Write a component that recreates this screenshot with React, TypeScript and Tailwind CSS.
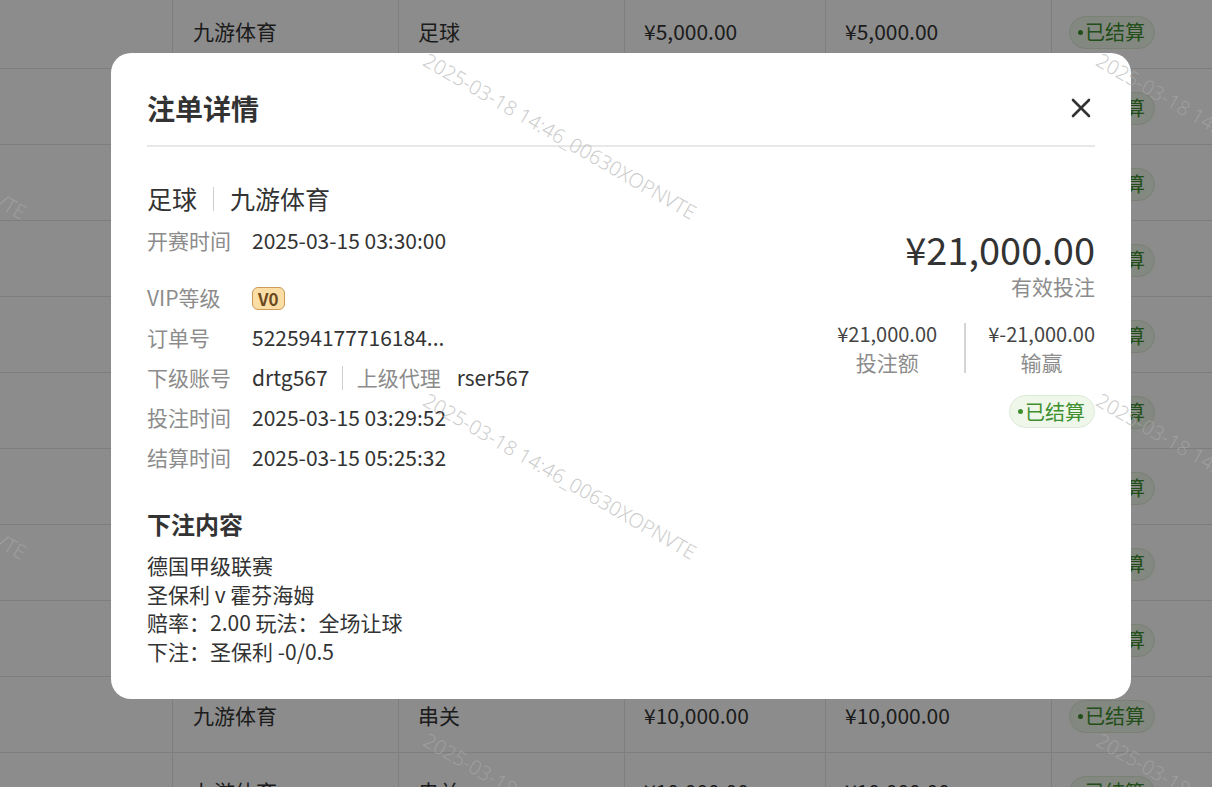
import React from "react";

type Row = {
    vendor: string;
    game: string;
    bet: string;
    valid: string;
};

const rows: Row[] = [
    { vendor: "九游体育", game: "足球", bet: "¥5,000.00", valid: "¥5,000.00" },
    { vendor: "九游体育", game: "足球", bet: "¥21,000.00", valid: "¥21,000.00" },
    { vendor: "九游体育", game: "足球", bet: "¥3,000.00", valid: "¥3,000.00" },
    { vendor: "九游体育", game: "足球", bet: "¥8,000.00", valid: "¥8,000.00" },
    { vendor: "九游体育", game: "足球", bet: "¥2,000.00", valid: "¥2,000.00" },
    { vendor: "九游体育", game: "串关", bet: "¥6,000.00", valid: "¥6,000.00" },
    { vendor: "九游体育", game: "串关", bet: "¥4,000.00", valid: "¥4,000.00" },
    { vendor: "九游体育", game: "串关", bet: "¥1,000.00", valid: "¥1,000.00" },
    { vendor: "九游体育", game: "串关", bet: "¥9,000.00", valid: "¥9,000.00" },
    { vendor: "九游体育", game: "串关", bet: "¥10,000.00", valid: "¥10,000.00" },
    { vendor: "九游体育", game: "串关", bet: "¥10,000.00", valid: "¥10,000.00" },
];

const watermarks = [
    { left: -240, top: 50 },
    { left: 430, top: 50 },
    { left: 1103, top: 50 },
    { left: -240, top: 390 },
    { left: 430, top: 390 },
    { left: 1103, top: 390 },
    { left: -240, top: 730 },
    { left: 430, top: 730 },
    { left: 1103, top: 730 },
];

const StatusBadge = () => (
    <span className="inline-flex items-center h-[33px] pl-[8px] pr-[9px] rounded-full bg-[#eef7ea] border border-[#dcebd5] text-[20px] text-[#3f8f2f]">
        <span className="w-[5px] h-[5px] rounded-full bg-current mr-[2px]" />
        已结算
    </span>
);

const InfoRow = ({ label, children }: { label: string; children: React.ReactNode }) => (
    <div className="flex items-center h-[28px]">
        <span className="w-[105px] shrink-0 text-[#8c8c8c]">{label}</span>
        <div className="flex items-center text-[#333]">{children}</div>
    </div>
);

const App = () => {
    return (
        <div
            className="relative w-full h-[787px] overflow-hidden bg-white"
            style={{ fontFamily: '"Noto Sans CJK SC", "Noto Sans", sans-serif' }}
        >
            {/* table behind the dialog */}
            <div className="-mt-[7px] text-[21px] text-[#333]">
                {rows.map((r, i) => (
                    <div
                        key={i}
                        className="grid grid-cols-[173px_226px_226px_201px_226px_1fr] h-[76px] border-b border-[#e6e6e6]"
                    >
                        <div className="border-r border-[#e6e6e6]" />
                        <div className="flex items-center pt-[3px] pl-[20px] border-r border-[#e6e6e6]">{r.vendor}</div>
                        <div className="flex items-center pt-[3px] pl-[19px] border-r border-[#e6e6e6]">{r.game}</div>
                        <div className="flex items-center pt-[3px] pl-[19px] border-r border-[#e6e6e6]">{r.bet}</div>
                        <div className="flex items-center pt-[3px] pl-[19px] border-r border-[#e6e6e6]">{r.valid}</div>
                        <div className="flex items-center pt-[3px] pl-[17px]">
                            <StatusBadge />
                        </div>
                    </div>
                ))}
            </div>

            <div className="absolute inset-0 bg-black/45" />

            {/* dialog */}
            <div className="absolute left-[111px] top-[53px] w-[1020px] h-[646px] bg-white rounded-[20px] px-[36px] pt-[38px]">
                <div className="flex items-center justify-between pb-[20px] border-b-2 border-[#e8e8e8]">
                    <h2 className="text-[28px] leading-[34px] font-bold text-[#333]">注单详情</h2>
                    <svg width="20" height="20" viewBox="0 0 20 20" className="mr-[4px]">
                        <path d="M2 2 L18 18 M18 2 L2 18" stroke="#333" strokeWidth="2.6" strokeLinecap="round" />
                    </svg>
                </div>

                <div className="flex justify-between pt-[36px] text-[21px]">
                    <div className="flex flex-col">
                        <div className="flex items-center h-[32px] text-[25px] text-[#333]">
                            <span>足球</span>
                            <span className="mx-[16px] w-px h-[24px] bg-[#cfcfcf]" />
                            <span>九游体育</span>
                        </div>
                        <div className="mt-[12px]">
                            <InfoRow label="开赛时间">2025-03-15 03:30:00</InfoRow>
                        </div>
                        <div className="mt-[29px] flex flex-col gap-[12px]">
                            <InfoRow label="VIP等级">
                                <span className="inline-flex items-center justify-center h-[23px] px-[5px] rounded-[6px] bg-[#fbdea6] border border-[#c99a58] text-[17px] font-bold text-[#6b4a1f] leading-none">
                                    V0
                                </span>
                            </InfoRow>
                            <InfoRow label="订单号">522594177716184...</InfoRow>
                            <InfoRow label="下级账号">
                                <span>drtg567</span>
                                <span className="mx-[14px] w-px h-[24px] bg-[#cfcfcf]" />
                                <span className="text-[#8c8c8c] mr-[16px]">上级代理</span>
                                <span>rser567</span>
                            </InfoRow>
                            <InfoRow label="投注时间">2025-03-15 03:29:52</InfoRow>
                            <InfoRow label="结算时间">2025-03-15 05:25:32</InfoRow>
                        </div>
                    </div>

                    <div className="flex flex-col items-end pt-[43px]">
                        <div className="text-[38px] leading-[46px] text-[#333]">¥21,000.00</div>
                        <div className="text-[21px] leading-[28px] text-[#8c8c8c]">有效投注</div>
                        <div className="flex items-center mt-[20px]">
                            <div className="flex flex-col items-center pr-[27px]">
                                <span className="text-[20px] leading-[28px] text-[#444]">¥21,000.00</span>
                                <span className="text-[21px] leading-[28px] text-[#8c8c8c]">投注额</span>
                            </div>
                            <span className="w-[2px] h-[50px] bg-[#d4d4d4]" />
                            <div className="flex flex-col items-center pl-[22px]">
                                <span className="text-[20px] leading-[28px] text-[#444]">¥-21,000.00</span>
                                <span className="text-[21px] leading-[28px] text-[#8c8c8c]">输赢</span>
                            </div>
                        </div>
                        <div className="mt-[14px]">
                            <StatusBadge />
                        </div>
                    </div>
                </div>

                <h3 className="mt-[37px] text-[24px] leading-[30px] font-bold text-[#333]">下注内容</h3>
                <div className="mt-[12px] text-[21px] leading-[28.5px] text-[#333]">
                    <div>德国甲级联赛</div>
                    <div>圣保利 v 霍芬海姆</div>
                    <div>赔率：2.00 玩法：全场让球</div>
                    <div>下注：圣保利 -0/0.5</div>
                </div>
            </div>

            {/* watermark layer */}
            <div className="absolute inset-0 pointer-events-none">
                {watermarks.map((w, i) => (
                    <span
                        key={i}
                        className="absolute whitespace-nowrap text-[20px] leading-none text-[rgba(170,170,170,0.6)] origin-top-left rotate-[30deg]"
                        style={{ left: w.left, top: w.top, fontFamily: '"Noto Sans", sans-serif', fontWeight: 300 }}
                    >
                        2025-03-18 14:46_00630XOPNVTE
                    </span>
                ))}
            </div>
        </div>
    );
};

export default App;
